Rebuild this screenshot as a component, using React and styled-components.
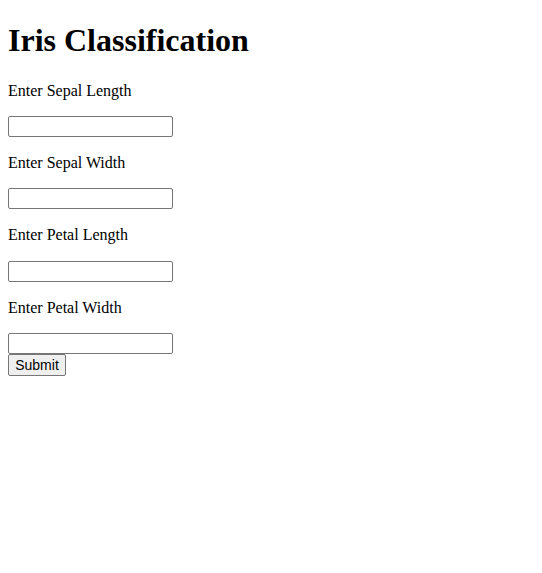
import React from "react";
import styled, { createGlobalStyle } from "styled-components";

const Global = createGlobalStyle`
  html, body { background: #fff; }
  body {
    margin: 8px;
    font-family: "Liberation Serif", "Times New Roman", serif;
    font-size: 16px;
    color: #000;
  }
`;

const Title = styled.h1`
  font-size: 32px;
  font-weight: bold;
  margin: 14.4px 0 21.44px;
`;

const Label = styled.p`
  margin: 16px 0;
  line-height: 19.3px;
`;

const Field = styled.input`
  display: block;
  box-sizing: border-box;
  width: 165px;
  height: 21px;
  margin: 0;
  padding: 1px 2px;
  border: 1px solid #767676;
  border-radius: 2px;
  background: #fff;
  font-family: "Liberation Sans", Arial, sans-serif;
  font-size: 13.33px;
`;

const SubmitButton = styled.button`
  display: block;
  box-sizing: border-box;
  width: 58px;
  height: 22px;
  margin: 0;
  padding: 1px 6px;
  border: 1px solid #767676;
  border-radius: 2px;
  background: #efefef;
  color: #000;
  font-family: "Liberation Sans", Arial, sans-serif;
  font-size: 14px;
`;

const fields = [
  "Enter Sepal Length",
  "Enter Sepal Width",
  "Enter Petal Length",
  "Enter Petal Width",
];

export default function App() {
  return (
    <>
      <Global />
      <Title>Iris Classification</Title>
      <form onSubmit={(e) => e.preventDefault()}>
        {fields.map((f) => (
          <React.Fragment key={f}>
            <Label>{f}</Label>
            <Field type="text" />
          </React.Fragment>
        ))}
        <SubmitButton type="submit">Submit</SubmitButton>
      </form>
    </>
  );
}
